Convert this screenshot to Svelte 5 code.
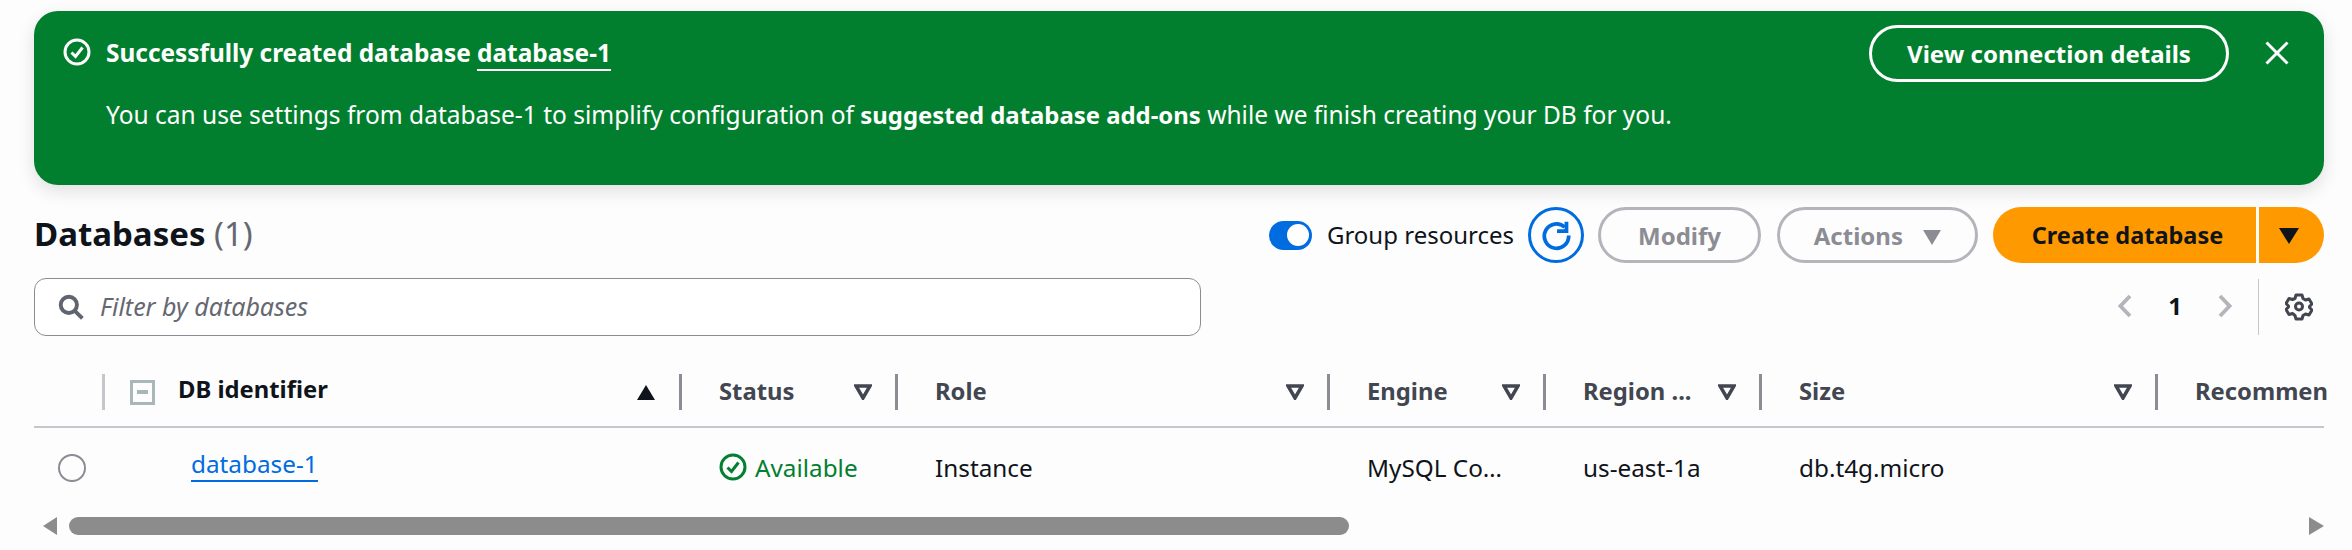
<script>
  const columns = [
    { label: 'Status', value: 'Available', width: 216, status: true },
    { label: 'Role', value: 'Instance', width: 432 },
    { label: 'Engine', value: 'MySQL Co…', width: 216 },
    { label: 'Region ...', value: 'us-east-1a', width: 216 },
    { label: 'Size', value: 'db.t4g.micro', width: 396 },
    { label: 'Recommen', value: '', width: 130, last: true }
  ];
</script>

<div class="page">
  <section class="flash">
    <div class="flash-main">
      <div class="flash-head">
        <svg class="check" viewBox="0 0 28 28" aria-hidden="true"><circle cx="14" cy="14" r="12" /><path d="M8.5 14.5l4 4 7-9" /></svg>
        <span class="flash-title">Successfully created database <a href="#top">database-1</a></span>
      </div>
      <p>You can use settings from database-1 to simplify configuration of <b>suggested database add-ons</b> while we finish creating your DB for you.</p>
    </div>
    <div class="flash-actions">
      <button class="flash-btn">View connection details</button>
      <svg class="close" viewBox="0 0 24 24" aria-hidden="true"><path d="M1.5 1.5l21 21M22.5 1.5l-21 21" /></svg>
    </div>
  </section>

  <header class="toolbar">
    <h1>Databases <span>(1)</span></h1>
    <div class="tools">
      <span class="toggle"><i></i></span>
      <span class="toggle-label">Group resources</span>
      <button class="refresh" aria-label="Refresh">
        <svg viewBox="0 0 28 28"><path d="M21.500 6.500A11 11 0 1 0 25 14" /><path d="M14.500 10H23V1.500" /></svg>
      </button>
      <button class="ghost modify">Modify</button>
      <button class="ghost actions">Actions <i class="tri"></i></button>
      <div class="split">
        <button class="primary">Create database</button>
        <button class="primary caret" aria-label="More"><i></i></button>
      </div>
    </div>
  </header>

  <div class="filter-row">
    <div class="filter">
      <svg viewBox="0 0 24 24" aria-hidden="true"><circle cx="10" cy="10" r="7.500" /><path d="M15.500 15.500l7 7" /></svg>
      <span>Filter by databases</span>
    </div>
    <div class="pager">
      <svg class="chev" viewBox="0 0 14 24"><path d="M12 2L2.500 12l9.500 10" /></svg>
      <b>1</b>
      <svg class="chev" viewBox="0 0 14 24"><path d="M2 2l9.500 10L2 22" /></svg>
      <span class="pager-sep"></span>
      <svg class="gear" viewBox="0 0 28 28"><circle cx="14" cy="14" r="3.500" /><path d="M11 2.500h6l1 3.500 2.500 1.500 3.500-1 3 5-2.500 2.500v1l2.500 2.500-3 5-3.500-1-2.500 1.500-1 3.500h-6l-1-3.500L7.500 21l-3.500 1-3-5 2.500-2.500v-1L1 11l3-5 3.500 1L10 6z" /></svg>
    </div>
  </div>

  <div class="table">
    <div class="head">
      <div class="cell-select"><span class="sep"></span></div>
      <div class="cell-id">
        <span class="bulk"><i></i></span>
        <span class="id-label">DB identifier</span>
        <i class="sort-up"></i>
        <span class="sep dark"></span>
      </div>
      {#each columns as col}
        <div class="col" style="width:{col.width}px">
          <span class="col-label">{col.label}</span>
          {#if !col.last}
            <svg class="filter-tri" viewBox="0 0 18 16"><path d="M2 2h14l-7 12z" /></svg>
            <span class="sep dark"></span>
          {/if}
        </div>
      {/each}
    </div>
    <div class="row">
      <div class="cell-select"><span class="radio"></span></div>
      <div class="cell-id body"><a href="#top">database-1</a></div>
      {#each columns as col}
        <div class="col body" style="width:{col.width}px">
          {#if col.status}
            <span class="status">
              <svg viewBox="0 0 28 28"><circle cx="14" cy="14" r="12" /><path d="M8.500 14.500l4 4 7-9" /></svg>
              {col.value}
            </span>
          {:else}
            {col.value}
          {/if}
        </div>
      {/each}
    </div>
  </div>

  <div class="scrollbar">
    <i class="arrow left"></i>
    <div class="track"><div class="thumb"></div></div>
    <i class="arrow right"></i>
  </div>
</div>

<style>
  :global(body) {
    margin: 0;
    background: #fdfdfd;
  }
  .page {
    width: 2352px;
    height: 550px;
    overflow: hidden;
    box-sizing: border-box;
    padding: 11px 28px 0 34px;
    font-family: "Noto Sans", sans-serif;
    font-size: 24px;
    color: #0f141a;
  }
  button {
    font: inherit;
    padding: 0;
    background: none;
    border: 0;
  }
  .flash {
    height: 174px;
    box-sizing: border-box;
    background: #027f2e;
    border-radius: 24px;
    color: #fff;
    display: flex;
    justify-content: space-between;
    padding: 14px 35px 0 29px;
    box-shadow: 0 6px 18px rgba(0, 7, 22, 0.12);
  }
  .flash-head {
    display: flex;
    align-items: center;
    gap: 15px;
    margin-top: 13px;
    height: 28px;
  }
  .check {
    width: 28px;
    height: 28px;
    fill: none;
    stroke: #fff;
    stroke-width: 3;
  }
  .flash-title {
    font-weight: 700;
    font-size: 24.4px;
  }
  .flash-title a {
    color: #fff;
    text-decoration: none;
    border-bottom: 2px solid #fff;
  }
  .flash p {
    margin: 34px 0 0 43px;
    line-height: 30px;
    font-size: 24.5px;
  }
  .flash p b {
    font-size: 23.9px;
  }
  .flash-actions {
    display: flex;
    align-items: flex-start;
    gap: 36px;
  }
  .flash-btn {
    width: 360px;
    height: 57px;
    border: 3px solid #fff;
    border-radius: 30px;
    color: #fff;
    font-weight: 700;
  }
  .close {
    width: 24px;
    height: 24px;
    margin-top: 16px;
    fill: none;
    stroke: #fff;
    stroke-width: 3;
  }
  .toolbar {
    height: 56px;
    margin-top: 22px;
    display: flex;
    align-items: center;
    justify-content: space-between;
  }
  h1 {
    margin: -3px 0 0;
    font-size: 33px;
    font-weight: 700;
  }
  h1 span {
    color: #656871;
    font-weight: 400;
  }
  .tools {
    display: flex;
    align-items: center;
  }
  .toggle {
    width: 43px;
    height: 29px;
    background: #006ce0;
    border-radius: 15px;
    display: flex;
    align-items: center;
    justify-content: flex-end;
    padding-right: 3px;
    box-sizing: border-box;
  }
  .toggle i {
    width: 22px;
    height: 22px;
    background: #fff;
    border-radius: 50%;
  }
  .toggle-label {
    margin-left: 15px;
    margin-right: 14px;
    margin-top: -2px;
  }
  .refresh {
    width: 56px;
    height: 56px;
    border: 3px solid #006ce0;
    border-radius: 50%;
    display: flex;
    align-items: center;
    justify-content: center;
    box-sizing: border-box;
  }
  .refresh svg {
    width: 31px;
    height: 31px;
    fill: none;
    stroke: #006ce0;
    stroke-width: 3.400;
  }
  .ghost {
    height: 56px;
    border: 3px solid #b4b4bb;
    border-radius: 30px;
    color: #8c8c94;
    font-weight: 700;
    box-sizing: border-box;
  }
  .modify {
    width: 163px;
    margin-left: 14px;
  }
  .actions {
    width: 201px;
    margin-left: 16px;
  }
  .tri {
    display: inline-block;
    width: 0;
    height: 0;
    margin-left: 14px;
    border: 9px solid transparent;
    border-top: 15px solid #8c8c94;
    border-bottom: 0;
  }
  .split {
    display: flex;
    margin-left: 15px;
    gap: 3px;
  }
  .primary {
    height: 56px;
    background: #ff9900;
    color: #0f141a;
    font-weight: 700;
    font-size: 23.5px;
    width: 263px;
    padding-left: 6px;
    border-radius: 30px 0 0 30px;
  }
  .caret {
    width: 65px;
    padding: 0 5px 0 0;
    border-radius: 0 30px 30px 0;
  }
  .caret i {
    display: inline-block;
    border: 10px solid transparent;
    border-top: 16px solid #0f141a;
    border-bottom: 0;
  }
  .filter-row {
    display: flex;
    justify-content: space-between;
    margin-top: 15px;
    height: 58px;
  }
  .filter {
    width: 1167px;
    box-sizing: border-box;
    border: 1px solid #8c8c94;
    border-radius: 12px;
    background: #fff;
    display: flex;
    align-items: center;
    gap: 16px;
    padding-left: 23px;
    color: #656871;
    font-style: italic;
    font-size: 25px;
  }
  .filter span {
    margin-top: -3px;
  }
  .filter svg {
    width: 26px;
    height: 26px;
    fill: none;
    stroke: #5f6470;
    stroke-width: 3.600;
  }
  .pager {
    display: flex;
    align-items: center;
    width: 206px;
  }
  .chev {
    width: 14px;
    height: 24px;
    margin-top: -2px;
    fill: none;
    stroke: #b4b4bb;
    stroke-width: 3.800;
  }
  .pager b {
    width: 86px;
    text-align: center;
    margin-top: -3px;
  }
  .pager-sep {
    width: 1px;
    height: 56px;
    background: #c6c6cd;
    margin-left: 26px;
  }
  .gear {
    width: 28px;
    height: 29px;
    margin-left: 26px;
    margin-top: -2px;
    fill: none;
    stroke: #424650;
    stroke-width: 3;
    stroke-linejoin: round;
  }
  .table {
    margin-top: 20px;
    width: 2290px;
  }
  .head {
    display: flex;
    height: 52px;
    border-bottom: 2px solid #c6c6cd;
    font-weight: 700;
    font-size: 23.8px;
    color: #424650;
    padding-top: 18px;
  }
  .head > div {
    height: 36px;
  }
  .cell-select {
    width: 71px;
    flex: none;
    display: flex;
    align-items: center;
    justify-content: flex-end;
  }
  .cell-id {
    width: 577px;
    flex: none;
    display: flex;
    align-items: center;
    box-sizing: border-box;
  }
  .sep {
    width: 3px;
    height: 36px;
    background: #c6c6cd;
    flex: none;
  }
  .sep.dark {
    background: #8c8c94;
  }
  .bulk {
    width: 25px;
    height: 25px;
    margin-left: 25px;
    border: 3px solid #aab7b8;
    box-sizing: border-box;
    display: flex;
    align-items: center;
    justify-content: center;
  }
  .bulk i {
    width: 11px;
    height: 4px;
    background: #aab7b8;
  }
  .id-label {
    margin-left: 23px;
    color: #0f141a;
    margin-top: -7px;
  }
  .sort-up {
    margin-left: auto;
    margin-right: 24px;
    border: 9px solid transparent;
    border-bottom: 15px solid #0f141a;
    border-top: 0;
  }
  .col {
    flex: none;
    display: flex;
    align-items: center;
    box-sizing: border-box;
    padding-left: 37px;
    white-space: nowrap;
  }
  .col-label {
    flex: 1;
    margin-top: -2px;
  }
  .filter-tri {
    width: 18px;
    height: 16px;
    fill: none;
    stroke: #424650;
    stroke-width: 3.500;
    margin-right: 23px;
  }
  .row {
    display: flex;
    align-items: center;
    height: 80px;
    font-size: 24.3px;
  }
  .col.body {
    margin-top: -2px;
  }
  .radio {
    width: 28px;
    height: 28px;
    border: 2px solid #8c8c94;
    border-radius: 50%;
    box-sizing: border-box;
    margin-right: 0;
    transform: translateX(-19px);
  }
  .cell-id.body {
    padding-left: 86px;
  }
  .cell-id.body a {
    color: #006ce0;
    text-decoration: none;
    border-bottom: 2px solid #006ce0;
    margin-top: -8px;
  }
  .status {
    color: #037f30;
    display: flex;
    align-items: center;
    gap: 8px;
  }
  .status svg {
    width: 28px;
    height: 28px;
    fill: none;
    stroke: #037f30;
    stroke-width: 3;
  }
  .scrollbar {
    display: flex;
    align-items: center;
    height: 18px;
    margin-top: 9px;
    margin-left: 9px;
  }
  .arrow {
    width: 0;
    height: 0;
    border: 9px solid transparent;
  }
  .arrow.left {
    border-right: 14px solid #8c8c8c;
    border-left: 0;
  }
  .arrow.right {
    border-left: 15px solid #8c8c8c;
    border-right: 0;
  }
  .track {
    width: 2243px;
    margin-left: 12px;
    margin-right: 0;
  }
  .thumb {
    width: 1280px;
    height: 18px;
    border-radius: 9px;
    background: #8c8c8c;
  }
</style>
